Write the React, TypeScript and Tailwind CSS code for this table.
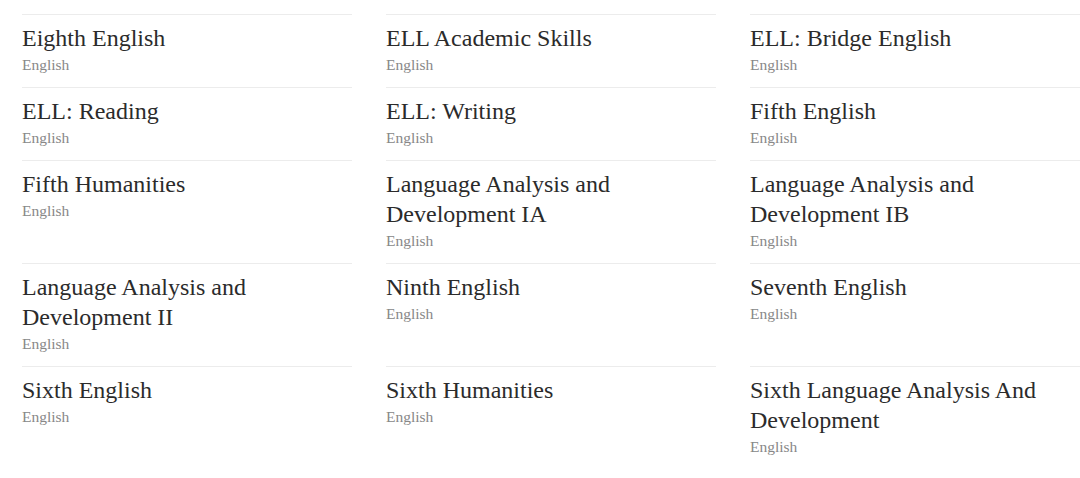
const courses = [
  { title: 'Eighth English', subject: 'English' },
  { title: 'ELL Academic Skills', subject: 'English' },
  { title: 'ELL: Bridge English', subject: 'English' },
  { title: 'ELL: Reading', subject: 'English' },
  { title: 'ELL: Writing', subject: 'English' },
  { title: 'Fifth English', subject: 'English' },
  { title: 'Fifth Humanities', subject: 'English' },
  { title: 'Language Analysis and Development IA', subject: 'English' },
  { title: 'Language Analysis and Development IB', subject: 'English' },
  { title: 'Language Analysis and Development II', subject: 'English' },
  { title: 'Ninth English', subject: 'English' },
  { title: 'Seventh English', subject: 'English' },
  { title: 'Sixth English', subject: 'English' },
  { title: 'Sixth Humanities', subject: 'English' },
  { title: 'Sixth Language Analysis And Development', subject: 'English' },
]

export default function App() {
  return (
    <div className="min-h-screen bg-white pl-[22px] pt-[14px] font-['Liberation_Serif',serif]">
      <div className="grid grid-cols-[330px_330px_330px] gap-x-[34px]">
        {courses.map((course) => (
          <div key={course.title} className="border-t border-[#ececec] pt-[8px] pb-[11px]">
            <div className="text-[24px] leading-[30px] text-[#2b2b2b] pr-8">{course.title}</div>
            <div className="text-[15.5px] leading-[22px] mt-[1px] text-[#888]">{course.subject}</div>
          </div>
        ))}
      </div>
    </div>
  )
}
